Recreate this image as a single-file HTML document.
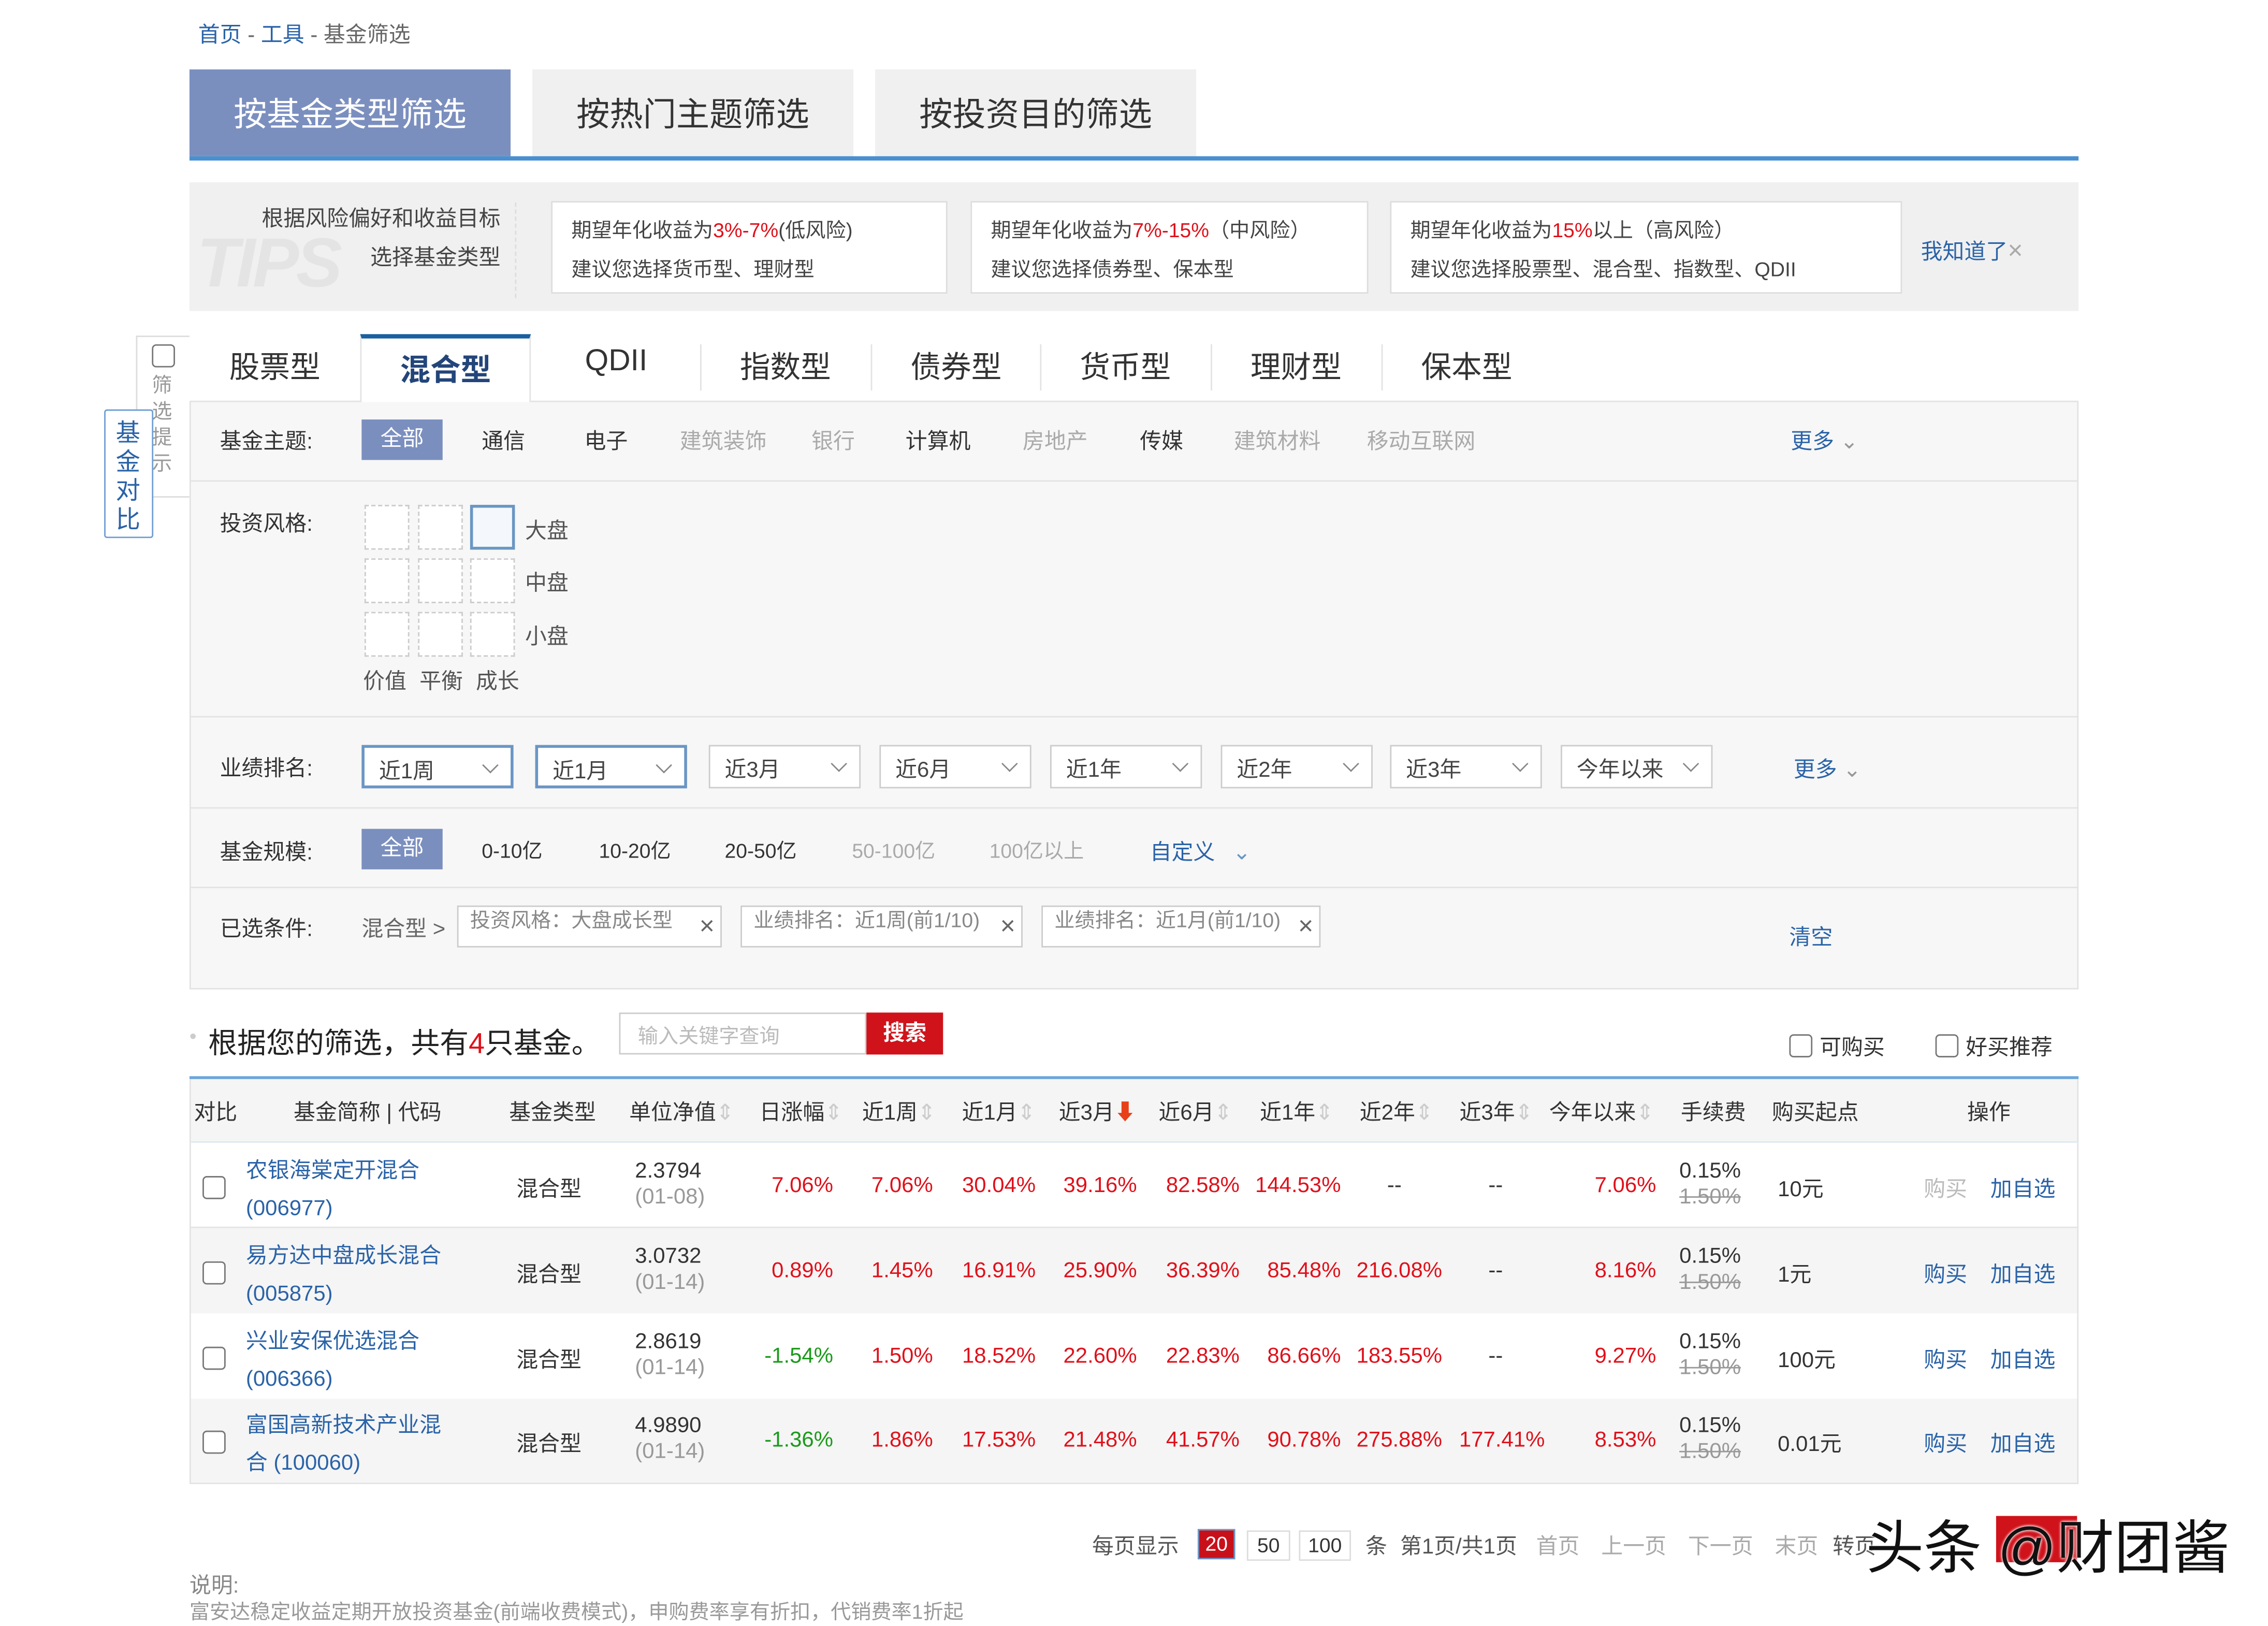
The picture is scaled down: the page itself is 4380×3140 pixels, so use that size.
<!DOCTYPE html>
<html><head><meta charset="utf-8">
<style>
html,body{margin:0;padding:0;width:4380px;height:3118px;overflow:hidden;background:#fff}
#w{position:absolute;left:0;top:0;width:1568px;height:1117px;transform:scale(2.7934);transform-origin:0 0;font-family:"Liberation Sans","Noto Sans CJK SC",sans-serif;color:#333;font-size:15px}
.a{position:absolute;white-space:nowrap}
.b{color:#2a63a8}
.g{color:#aaa}
.r{color:#e0101a}
.gr{color:#1a9a1a}
.sel{position:absolute;top:515px;width:105px;height:30px;border:1px solid #ccc;background:#fff;box-sizing:border-box}
.sel span{position:absolute;left:10px;top:5px;font-size:15px;color:#444}
.sel i{position:absolute;right:10px;top:8px;width:7px;height:7px;border-right:1.5px solid #888;border-bottom:1.5px solid #888;transform:rotate(45deg)}
.sq{position:absolute;width:29px;height:29px;border:1px dashed #ccc;background:#fff}
.cb{position:absolute;width:14px;height:14px;border:1.5px solid #777;border-radius:3px;background:#fff}
.hl{position:absolute;left:131px;width:1306px;height:1px;background:#e3e3e3}
.tag{position:absolute;top:626px;height:29px;border:1px solid #ccc;background:#fff;box-sizing:border-box;color:#888;font-size:14px;padding:0 0 0 8px;line-height:18px}
.tag b{position:absolute;right:4px;top:4px;font-weight:normal;font-size:18px;color:#666;line-height:18px}
.ct{position:absolute;top:238px;font-size:21px;color:#333;width:116px;text-align:center}
.rw{position:absolute;left:131px;width:1306px;height:59px}
.num{position:absolute;text-align:right;white-space:nowrap}
.mt{position:absolute;top:48px;width:222px;height:60px;font-size:23px;line-height:62px;text-align:center}
</style></head><body><div id="w">

<div class="a" style="left:137px;top:13px;font-size:15px"><span class="b">首页</span> <span style="color:#666">-</span> <span class="b">工具</span> <span style="color:#666">- 基金筛选</span></div>

<div class="mt" style="left:131px;background:#7b8fbf;color:#fff">按基金类型筛选</div>
<div class="mt" style="left:368px;background:#f0f0f0;color:#333">按热门主题筛选</div>
<div class="mt" style="left:605px;background:#f0f0f0;color:#333">按投资目的筛选</div>
<div class="a" style="left:131px;top:108px;width:1306px;height:3px;background:#4a90d0"></div>

<div class="a" style="left:131px;top:126px;width:1306px;height:89px;background:#f0f0f0"></div>
<div class="a" style="left:136px;top:155px;font-size:48px;font-weight:bold;font-style:italic;color:#e4e4e4;letter-spacing:-2px">TIPS</div>
<div class="a" style="left:160px;top:138px;width:186px;text-align:right;font-size:15px;color:#444;line-height:27px">根据风险偏好和收益目标<br>选择基金类型</div>
<div class="a" style="left:356px;top:140px;height:66px;border-left:1px dashed #ddd"></div>
<div class="a" style="left:381px;top:139px;width:274px;height:64px;background:#fff;border:1px solid #ddd;box-sizing:border-box;padding:6px 0 0 13px;font-size:14px;color:#444;line-height:27px">期望年化收益为<span class="r">3%-7%</span>(低风险)<br>建议您选择货币型、理财型</div>
<div class="a" style="left:671px;top:139px;width:275px;height:64px;background:#fff;border:1px solid #ddd;box-sizing:border-box;padding:6px 0 0 13px;font-size:14px;color:#444;line-height:27px">期望年化收益为<span class="r">7%-15%</span>（中风险）<br>建议您选择债券型、保本型</div>
<div class="a" style="left:961px;top:139px;width:354px;height:64px;background:#fff;border:1px solid #ddd;box-sizing:border-box;padding:6px 0 0 13px;font-size:14px;color:#444;line-height:27px">期望年化收益为<span class="r">15%</span>以上（高风险）<br>建议您选择股票型、混合型、指数型、QDII</div>
<div class="a b" style="left:1328px;top:163px;font-size:15px">我知道了<span style="color:#aaa;font-size:18px">×</span></div>

<div class="a" style="left:94px;top:232px;width:36px;height:110px;border:1px solid #ddd;border-right:none;background:#fff"></div>
<div class="cb" style="left:105px;top:238px"></div>
<div class="a" style="left:105px;top:257px;width:15px;font-size:14px;color:#999;line-height:18px;white-space:normal">筛选提示</div>
<div class="a" style="left:72px;top:283px;width:32px;height:87px;border:1px solid #6f9fd4;background:#fff;border-radius:2px"></div>
<div class="a" style="left:80px;top:290px;width:18px;font-size:17px;color:#2a63a8;line-height:20px;white-space:normal">基金对比</div>

<div class="a" style="left:131px;top:277px;width:1306px;height:407px;background:#f7f7f7;border:1px solid #e3e3e3;box-sizing:border-box"></div>
<div class="ct" style="left:132px">股票型</div>
<div class="a" style="left:249px;top:231px;width:118px;height:47px;background:#fff;border-top:3px solid #1a5fa0;box-sizing:border-box;border-left:1px solid #e3e3e3;border-right:1px solid #e3e3e3"></div>
<div class="ct" style="left:250px;color:#23457a;font-weight:bold;top:240px">混合型</div>
<div class="ct" style="left:368px">QDII</div>
<div class="ct" style="left:485px">指数型</div>
<div class="ct" style="left:603px">债券型</div>
<div class="ct" style="left:720px">货币型</div>
<div class="ct" style="left:838px">理财型</div>
<div class="ct" style="left:956px">保本型</div>
<div class="a" style="left:484px;top:238px;width:1px;height:32px;background:#e3e3e3"></div>
<div class="a" style="left:602px;top:238px;width:1px;height:32px;background:#e3e3e3"></div>
<div class="a" style="left:719px;top:238px;width:1px;height:32px;background:#e3e3e3"></div>
<div class="a" style="left:837px;top:238px;width:1px;height:32px;background:#e3e3e3"></div>
<div class="a" style="left:955px;top:238px;width:1px;height:32px;background:#e3e3e3"></div>

<div class="a" style="left:152px;top:294px">基金主题:</div>
<div class="a" style="left:250px;top:290px;width:56px;height:28px;background:#7b8fbf;color:#fff;text-align:center;line-height:28px">全部</div>
<div class="a" style="left:333px;top:294px">通信</div>
<div class="a" style="left:404px;top:294px">电子</div>
<div class="a g" style="left:470px;top:294px">建筑装饰</div>
<div class="a g" style="left:561px;top:294px">银行</div>
<div class="a" style="left:626px;top:294px">计算机</div>
<div class="a g" style="left:707px;top:294px">房地产</div>
<div class="a" style="left:788px;top:294px">传媒</div>
<div class="a g" style="left:853px;top:294px">建筑材料</div>
<div class="a g" style="left:945px;top:294px">移动互联网</div>
<div class="a b" style="left:1238px;top:294px">更多 <span style="color:#999">⌄</span></div>
<div class="hl" style="top:332px"></div>

<div class="a" style="left:152px;top:351px">投资风格:</div>
<div class="sq" style="left:252px;top:349px"></div><div class="sq" style="left:289px;top:349px"></div>
<div class="a" style="left:325px;top:349px;width:27px;height:27px;border:2px solid #6a96c4;background:#f4f8fc"></div>
<div class="sq" style="left:252px;top:386px"></div><div class="sq" style="left:289px;top:386px"></div><div class="sq" style="left:325px;top:386px"></div>
<div class="sq" style="left:252px;top:423px"></div><div class="sq" style="left:289px;top:423px"></div><div class="sq" style="left:325px;top:423px"></div>
<div class="a" style="left:363px;top:356px;color:#555">大盘</div>
<div class="a" style="left:363px;top:392px;color:#555">中盘</div>
<div class="a" style="left:363px;top:429px;color:#555">小盘</div>
<div class="a" style="left:251px;top:460px;color:#555">价值</div>
<div class="a" style="left:290px;top:460px;color:#555">平衡</div>
<div class="a" style="left:329px;top:460px;color:#555">成长</div>
<div class="hl" style="top:495px"></div>

<div class="a" style="left:152px;top:520px">业绩排名:</div>
<div class="sel" style="left:250px;border:2px solid #6a96c4"><span>近1周</span><i></i></div>
<div class="sel" style="left:370px;border:2px solid #6a96c4"><span>近1月</span><i></i></div>
<div class="sel" style="left:490px"><span>近3月</span><i></i></div>
<div class="sel" style="left:608px"><span>近6月</span><i></i></div>
<div class="sel" style="left:726px"><span>近1年</span><i></i></div>
<div class="sel" style="left:844px"><span>近2年</span><i></i></div>
<div class="sel" style="left:961px"><span>近3年</span><i></i></div>
<div class="sel" style="left:1079px"><span>今年以来</span><i></i></div>
<div class="a b" style="left:1240px;top:521px">更多 <span style="color:#999">⌄</span></div>
<div class="hl" style="top:558px"></div>

<div class="a" style="left:152px;top:578px">基金规模:</div>
<div class="a" style="left:250px;top:573px;width:56px;height:28px;background:#7b8fbf;color:#fff;text-align:center;line-height:28px">全部</div>
<div class="a" style="left:333px;top:578px;font-size:14px">0-10亿</div>
<div class="a" style="left:414px;top:578px;font-size:14px">10-20亿</div>
<div class="a" style="left:501px;top:578px;font-size:14px">20-50亿</div>
<div class="a g" style="left:589px;top:578px;font-size:14px">50-100亿</div>
<div class="a g" style="left:684px;top:578px;font-size:14px">100亿以上</div>
<div class="a b" style="left:795px;top:578px">自定义 <span style="color:#6a96c4;margin-left:8px">⌄</span></div>
<div class="hl" style="top:613px"></div>

<div class="a" style="left:152px;top:631px">已选条件:</div>
<div class="a" style="left:250px;top:631px;color:#666">混合型 &gt;</div>
<div class="tag" style="left:316px;width:183px">投资风格：大盘成长型<b>×</b></div>
<div class="tag" style="left:512px;width:195px">业绩排名：近1周(前1/10)<b>×</b></div>
<div class="tag" style="left:720px;width:193px">业绩排名：近1月(前1/10)<b>×</b></div>
<div class="a b" style="left:1237px;top:637px">清空</div>

<div class="a" style="left:131px;top:708px;color:#ccc;font-size:14px">•</div>
<div class="a" style="left:144px;top:705px;font-size:20px;color:#222">根据您的筛选，共有<span class="r">4</span>只基金。</div>
<div class="a" style="left:428px;top:700px;width:171px;height:29px;border:1px solid #ccc;box-sizing:border-box;color:#bbb;font-size:14px;padding:5px 0 0 12px">输入关键字查询</div>
<div class="a" style="left:599px;top:700px;width:53px;height:29px;background:#d0121b;color:#fff;text-align:center;line-height:29px;font-weight:bold">搜索</div>
<div class="cb" style="left:1237px;top:715px"></div><div class="a" style="left:1258px;top:713px">可购买</div>
<div class="cb" style="left:1338px;top:715px"></div><div class="a" style="left:1359px;top:713px">好买推荐</div>

<div class="a" style="left:131px;top:744px;width:1306px;height:2px;background:#6aa6dc"></div>
<div class="a" style="left:131px;top:746px;width:1306px;height:44px;background:#f5f5f5;border-left:1px solid #e3e3e3;border-right:1px solid #e3e3e3;box-sizing:border-box;border-bottom:1px solid #dde8f2"></div>
<div class="a" style="left:134px;top:758px">对比</div>
<div class="a" style="left:203px;top:758px">基金简称 | 代码</div>
<div class="a" style="left:352px;top:758px">基金类型</div>
<div class="a" style="left:435px;top:758px">单位净值<span style="color:#ccc">⇕</span></div>
<div class="a" style="left:525px;top:758px">日涨幅<span style="color:#ccc">⇕</span></div>
<div class="a" style="left:596px;top:758px">近1周<span style="color:#ccc">⇕</span></div>
<div class="a" style="left:665px;top:758px">近1月<span style="color:#ccc">⇕</span></div>
<div class="a" style="left:732px;top:758px">近3月<span style="color:#e8401a;font-weight:bold">⬇</span></div>
<div class="a" style="left:801px;top:758px">近6月<span style="color:#ccc">⇕</span></div>
<div class="a" style="left:871px;top:758px">近1年<span style="color:#ccc">⇕</span></div>
<div class="a" style="left:940px;top:758px">近2年<span style="color:#ccc">⇕</span></div>
<div class="a" style="left:1009px;top:758px">近3年<span style="color:#ccc">⇕</span></div>
<div class="a" style="left:1071px;top:758px">今年以来<span style="color:#ccc">⇕</span></div>
<div class="a" style="left:1162px;top:758px">手续费</div>
<div class="a" style="left:1225px;top:758px">购买起点</div>
<div class="a" style="left:1360px;top:758px">操作</div>

<div class="rw" style="top:790px;background:#fff;border:1px solid #e3e3e3;border-top:none;box-sizing:border-box"></div>
<div class="rw" style="top:849px;background:#f5f5f5;border-left:1px solid #e3e3e3;border-right:1px solid #e3e3e3;box-sizing:border-box"></div>
<div class="rw" style="top:908px;background:#fff;border-left:1px solid #e3e3e3;border-right:1px solid #e3e3e3;box-sizing:border-box"></div>
<div class="rw" style="top:967px;background:#f5f5f5;border:1px solid #e3e3e3;border-top:none;box-sizing:border-box"></div>

<div class="cb" style="left:140px;top:813px"></div>
<div class="a b" style="left:170px;top:797px;line-height:26px">农银海棠定开混合<br>(006977)</div>
<div class="a" style="left:357px;top:811px">混合型</div>
<div class="a" style="left:439px;top:801px;line-height:18px">2.3794<br><span style="color:#999">(01-08)</span></div>
<div class="num r" style="right:992px;top:811px">7.06%</div>
<div class="num r" style="right:923px;top:811px">7.06%</div>
<div class="num r" style="right:852px;top:811px">30.04%</div>
<div class="num r" style="right:782px;top:811px">39.16%</div>
<div class="num r" style="right:711px;top:811px">82.58%</div>
<div class="num r" style="right:641px;top:811px">144.53%</div>
<div class="a" style="left:959px;top:811px">--</div>
<div class="a" style="left:1029px;top:811px">--</div>
<div class="num r" style="right:423px;top:811px">7.06%</div>
<div class="a" style="left:1161px;top:801px;line-height:18px">0.15%<br><s style="color:#999">1.50%</s></div>
<div class="a" style="left:1229px;top:811px">10元</div>
<div class="a" style="left:1330px;top:811px;color:#bbb">购买</div>
<div class="a b" style="left:1376px;top:811px">加自选</div>

<div class="cb" style="left:140px;top:872px"></div>
<div class="a b" style="left:170px;top:856px;line-height:26px">易方达中盘成长混合<br>(005875)</div>
<div class="a" style="left:357px;top:870px">混合型</div>
<div class="a" style="left:439px;top:860px;line-height:18px">3.0732<br><span style="color:#999">(01-14)</span></div>
<div class="num r" style="right:992px;top:870px">0.89%</div>
<div class="num r" style="right:923px;top:870px">1.45%</div>
<div class="num r" style="right:852px;top:870px">16.91%</div>
<div class="num r" style="right:782px;top:870px">25.90%</div>
<div class="num r" style="right:711px;top:870px">36.39%</div>
<div class="num r" style="right:641px;top:870px">85.48%</div>
<div class="num r" style="right:571px;top:870px">216.08%</div>
<div class="a" style="left:1029px;top:870px">--</div>
<div class="num r" style="right:423px;top:870px">8.16%</div>
<div class="a" style="left:1161px;top:860px;line-height:18px">0.15%<br><s style="color:#999">1.50%</s></div>
<div class="a" style="left:1229px;top:870px">1元</div>
<div class="a b" style="left:1330px;top:870px">购买</div>
<div class="a b" style="left:1376px;top:870px">加自选</div>

<div class="cb" style="left:140px;top:931px"></div>
<div class="a b" style="left:170px;top:915px;line-height:26px">兴业安保优选混合<br>(006366)</div>
<div class="a" style="left:357px;top:929px">混合型</div>
<div class="a" style="left:439px;top:919px;line-height:18px">2.8619<br><span style="color:#999">(01-14)</span></div>
<div class="num gr" style="right:992px;top:929px">-1.54%</div>
<div class="num r" style="right:923px;top:929px">1.50%</div>
<div class="num r" style="right:852px;top:929px">18.52%</div>
<div class="num r" style="right:782px;top:929px">22.60%</div>
<div class="num r" style="right:711px;top:929px">22.83%</div>
<div class="num r" style="right:641px;top:929px">86.66%</div>
<div class="num r" style="right:571px;top:929px">183.55%</div>
<div class="a" style="left:1029px;top:929px">--</div>
<div class="num r" style="right:423px;top:929px">9.27%</div>
<div class="a" style="left:1161px;top:919px;line-height:18px">0.15%<br><s style="color:#999">1.50%</s></div>
<div class="a" style="left:1229px;top:929px">100元</div>
<div class="a b" style="left:1330px;top:929px">购买</div>
<div class="a b" style="left:1376px;top:929px">加自选</div>

<div class="cb" style="left:140px;top:989px"></div>
<div class="a b" style="left:170px;top:973px;line-height:26px">富国高新技术产业混<br>合 (100060)</div>
<div class="a" style="left:357px;top:987px">混合型</div>
<div class="a" style="left:439px;top:977px;line-height:18px">4.9890<br><span style="color:#999">(01-14)</span></div>
<div class="num gr" style="right:992px;top:987px">-1.36%</div>
<div class="num r" style="right:923px;top:987px">1.86%</div>
<div class="num r" style="right:852px;top:987px">17.53%</div>
<div class="num r" style="right:782px;top:987px">21.48%</div>
<div class="num r" style="right:711px;top:987px">41.57%</div>
<div class="num r" style="right:641px;top:987px">90.78%</div>
<div class="num r" style="right:571px;top:987px">275.88%</div>
<div class="num r" style="right:500px;top:987px">177.41%</div>
<div class="num r" style="right:423px;top:987px">8.53%</div>
<div class="a" style="left:1161px;top:977px;line-height:18px">0.15%<br><s style="color:#999">1.50%</s></div>
<div class="a" style="left:1229px;top:987px">0.01元</div>
<div class="a b" style="left:1330px;top:987px">购买</div>
<div class="a b" style="left:1376px;top:987px">加自选</div>

<div class="a" style="left:755px;top:1058px;color:#555">每页显示</div>
<div class="a" style="left:829px;top:1058px;width:24px;height:19px;background:#c8101b;color:#fff;text-align:center;font-size:14px;line-height:19px;outline:1px solid #6a96c4">20</div>
<div class="a" style="left:862px;top:1058px;width:28px;height:19px;border:1px solid #ddd;text-align:center;font-size:14px;line-height:19px">50</div>
<div class="a" style="left:898px;top:1058px;width:34px;height:19px;border:1px solid #ddd;text-align:center;font-size:14px;line-height:19px">100</div>
<div class="a" style="left:944px;top:1058px;color:#555">条</div>
<div class="a" style="left:968px;top:1058px;color:#555">第1页/共1页</div>
<div class="a g" style="left:1062px;top:1058px">首页</div>
<div class="a g" style="left:1107px;top:1058px">上一页</div>
<div class="a g" style="left:1167px;top:1058px">下一页</div>
<div class="a g" style="left:1227px;top:1058px">末页</div>
<div class="a" style="left:1267px;top:1058px;color:#555">转页</div>
<div class="a" style="left:1380px;top:1048px;width:56px;height:32px;background:#d0121b"></div>
<div class="a" style="left:1290px;top:1038px;font-size:40px;color:#111;text-shadow:0 0 2px #fff,0 0 2px #fff">头条 @财团酱</div>

<div class="a" style="left:131px;top:1085px;color:#888">说明:</div>
<div class="a" style="left:131px;top:1104px;color:#999;font-size:14px">富安达稳定收益定期开放投资基金(前端收费模式)，申购费率享有折扣，代销费率1折起</div>

</div></body></html>
